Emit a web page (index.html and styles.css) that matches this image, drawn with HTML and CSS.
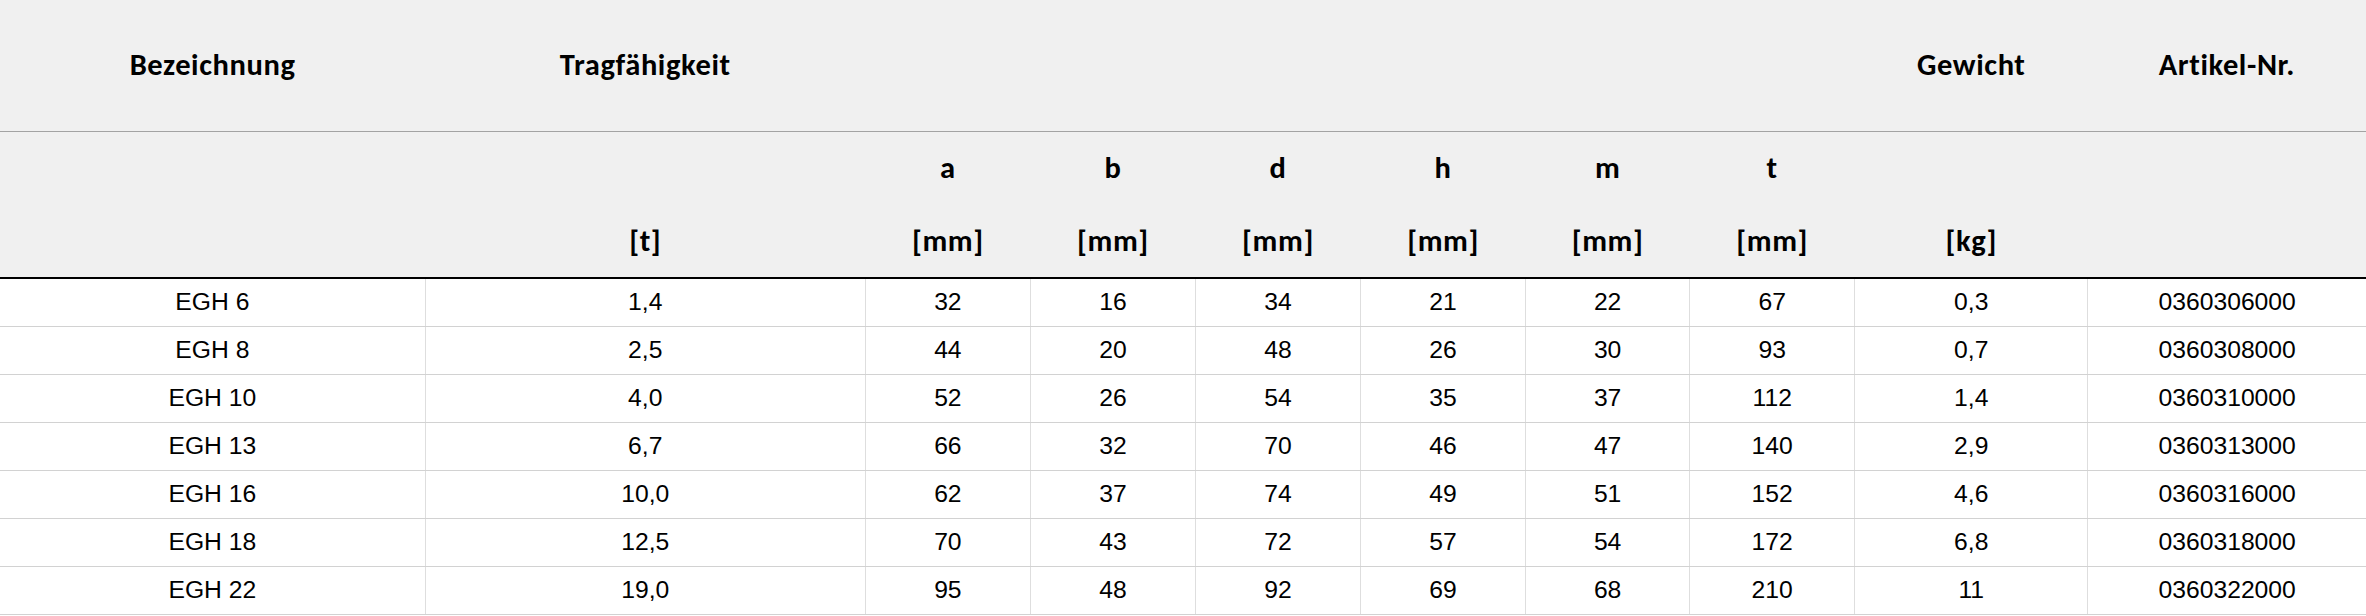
FILE: index.html
```html
<!DOCTYPE html>
<html lang="de">
<head>
<meta charset="utf-8">
<title>EGH</title>
<link rel="stylesheet" href="styles.css">
</head>
<body>
<table class="spec">
  <colgroup>
    <col class="c-name"><col class="c-load"><col class="c-dim"><col class="c-dim"><col class="c-dim"><col class="c-dim"><col class="c-dim4"><col class="c-dim"><col class="c-weight"><col class="c-art">
  </colgroup>
  <thead>
    <tr class="h1">
      <th>Bezeichnung</th><th>Tragfähigkeit</th><th></th><th></th><th></th><th></th><th></th><th></th><th>Gewicht</th><th>Artikel-Nr.</th>
    </tr>
    <tr class="h2">
      <th></th><th></th><th>a</th><th>b</th><th>d</th><th>h</th><th>m</th><th>t</th><th></th><th></th>
    </tr>
    <tr class="h3">
      <th></th><th>[t]</th><th>[mm]</th><th>[mm]</th><th>[mm]</th><th>[mm]</th><th>[mm]</th><th>[mm]</th><th>[kg]</th><th></th>
    </tr>
  </thead>
  <tbody>
    <tr><td>EGH 6</td><td>1,4</td><td>32</td><td>16</td><td>34</td><td>21</td><td>22</td><td>67</td><td>0,3</td><td>0360306000</td></tr>
    <tr><td>EGH 8</td><td>2,5</td><td>44</td><td>20</td><td>48</td><td>26</td><td>30</td><td>93</td><td>0,7</td><td>0360308000</td></tr>
    <tr><td>EGH 10</td><td>4,0</td><td>52</td><td>26</td><td>54</td><td>35</td><td>37</td><td>112</td><td>1,4</td><td>0360310000</td></tr>
    <tr><td>EGH 13</td><td>6,7</td><td>66</td><td>32</td><td>70</td><td>46</td><td>47</td><td>140</td><td>2,9</td><td>0360313000</td></tr>
    <tr><td>EGH 16</td><td>10,0</td><td>62</td><td>37</td><td>74</td><td>49</td><td>51</td><td>152</td><td>4,6</td><td>0360316000</td></tr>
    <tr><td>EGH 18</td><td>12,5</td><td>70</td><td>43</td><td>72</td><td>57</td><td>54</td><td>172</td><td>6,8</td><td>0360318000</td></tr>
    <tr><td>EGH 22</td><td>19,0</td><td>95</td><td>48</td><td>92</td><td>69</td><td>68</td><td>210</td><td>11</td><td>0360322000</td></tr>
  </tbody>
</table>
</body>
</html>
```

FILE: styles.css
```css
html, body {
  margin: 0;
  padding: 0;
  background: #ffffff;
}

.spec {
  width: 2366px;
  border-collapse: collapse;
  table-layout: fixed;
  border-spacing: 0;
}

.c-name { width: 425px; }
.c-load { width: 440px; }
.c-dim { width: 165px; }
.c-dim4 { width: 164px; }
.c-weight { width: 233px; }
.c-art { width: 278px; }

.spec thead th {
  background: #f0f0f0;
  font-family: "Carlito", "Lato", sans-serif;
  font-weight: 700;
  font-size: 30.5px;
  letter-spacing: 0.6px;
  font-variant-ligatures: none;
  color: #000;
  text-align: center;
  vertical-align: middle;
  padding: 0;
  line-height: 1;
}

.spec .h1 th {
  height: 131px;
  border-bottom: 1px solid #a3a3a3;
}

.spec .h2 th {
  height: 73px;
}

.spec .h3 th {
  height: 72px;
  border-bottom: 2px solid #000;
}

.spec tbody td {
  font-family: "Liberation Sans", Arial, sans-serif;
  font-size: 24.7px;
  color: #000;
  text-align: center;
  vertical-align: middle;
  height: 47px;
  padding: 0;
  line-height: 1;
  border-bottom: 1px solid #d2d2d2;
  border-right: 1px solid #dedede;
}

.spec tbody td:last-child {
  border-right: none;
}
```
